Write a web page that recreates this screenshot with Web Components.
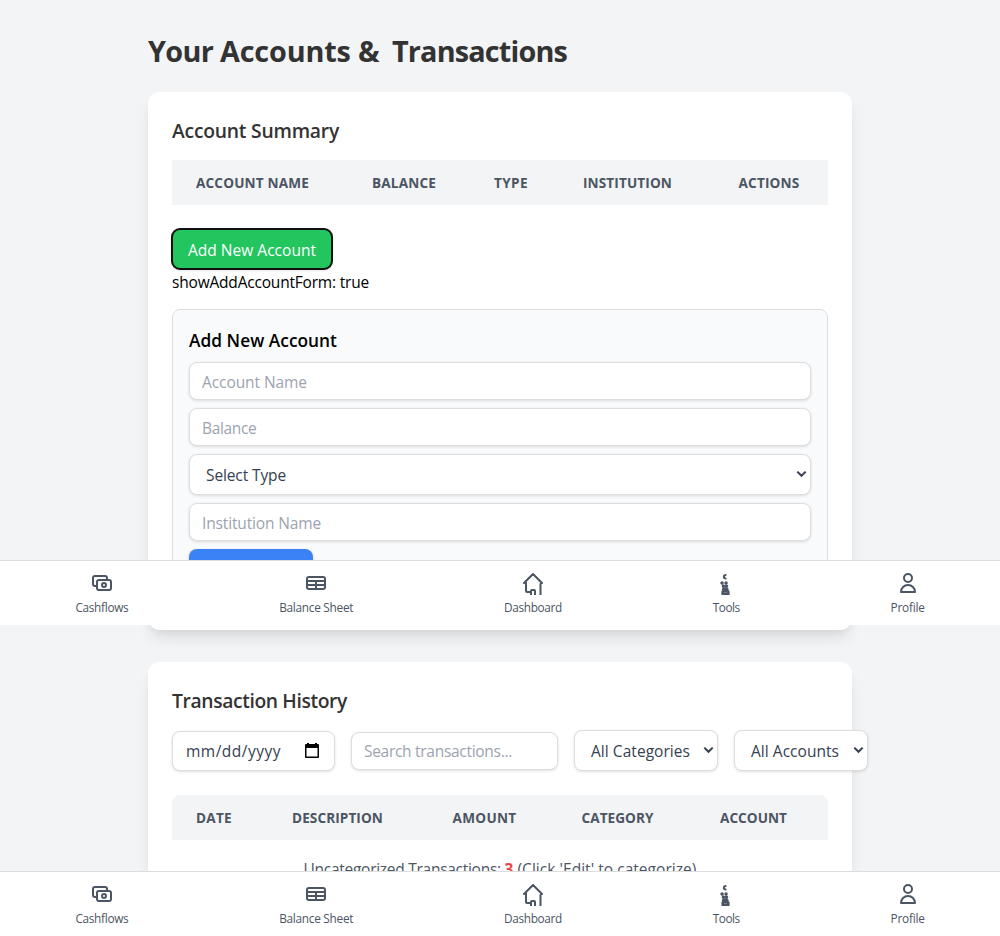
<!DOCTYPE html>
<html lang="en">
<head>
<meta charset="utf-8">
<title>Accounts</title>
<style>
html, body { margin: 0; height: 100%; overflow: hidden; }
body { background: #f3f4f6; font-family: "Open Sans", "Noto Sans", sans-serif; color: #000; }
</style>
</head>
<body>
<accounts-page></accounts-page>
<script>
const define = (name, css, html, after) => customElements.define(name, class extends HTMLElement {
  connectedCallback() {
    if (this.shadowRoot) return;
    const root = this.attachShadow({ mode: "open" });
    root.innerHTML = `<style>*{box-sizing:border-box}${css}</style>` + (typeof html === "function" ? html(this) : html);
    if (after) after(this, root);
  }
});

/* A single line of text, tracked to fill a given advance width. */
define("fit-text", ":host{display:inline-block;white-space:pre}", "<slot></slot>", (el) => {
  const target = parseFloat(el.getAttribute("w"));
  if (!target) return;
  const natural = el.getBoundingClientRect().width;
  el.style.letterSpacing = ((target - natural) / el.textContent.length) + "px";
  el.style.width = target + "px";
});

define("page-card", `
  :host{display:block;background:#fff;border-radius:12px;padding:24px;box-shadow:0 10px 15px -3px rgba(0,0,0,.1),0 4px 6px -2px rgba(0,0,0,.05)}
  h2{margin:0 0 14px;height:30px;font-size:19.3px;line-height:30px;font-weight:600;color:#333}
`, el => `<h2><fit-text w="${el.getAttribute("w")}">${el.getAttribute("heading")}</fit-text></h2><slot></slot>`);

define("table-head", `
  :host{display:grid;height:45px;align-items:center;justify-items:start;background:#f3f4f6;color:#4b5563;font-size:13.6px;font-weight:700;padding-left:24px}
  :host([rounded]){border-radius:8px 8px 0 0}
`, "<slot></slot>");

define("text-field", `
  :host{display:flex;align-items:center;height:38px;padding:1px 12px 0;border:1px solid #ddd;border-radius:8px;background:#fff;color:#9ca3af;font-size:15.5px;box-shadow:0 1px 3px rgba(0,0,0,.12)}
`, "<slot></slot>");

define("select-field", `
  :host{display:flex;align-items:center;justify-content:space-between;height:41px;padding:1px 3px 0 16px;border:1px solid #ddd;border-radius:8px;background:#fff;color:#374151;font-size:15.5px;box-shadow:0 1px 3px rgba(0,0,0,.12)}
  svg{display:block;margin-top:-2px}
`, `<slot></slot><svg width="11" height="8" viewBox="0 0 11 8" fill="none" stroke="#374151" stroke-width="2"><path d="M1.3 1.6 5.5 5.8 9.7 1.6"/></svg>`);

define("date-field", `
  :host{display:flex;align-items:center;justify-content:space-between;height:40px;padding:1px 15px 0 13px;border:1px solid #ddd;border-radius:8px;background:#fff;color:#374151;font-size:15.5px;box-shadow:0 1px 3px rgba(0,0,0,.12)}
  svg{display:block;margin-top:-1px}
`, `<slot></slot><svg width="14" height="15" viewBox="0 0 14 15"><path fill="#000" fill-rule="evenodd" d="M2 0h2v1h6V0h2v1h1a1 1 0 0 1 1 1v12a1 1 0 0 1-1 1H1a1 1 0 0 1-1-1V2a1 1 0 0 1 1-1h1zM1.5 5v8.5h11V5z"/></svg>`);

define("action-button", `
  :host{display:block}
  button{display:flex;align-items:center;height:40px;margin:0;padding:1px 16px 0;border:0;border-radius:8px;background:#3b82f6;color:#fff;font:400 15.5px "Open Sans","Noto Sans",sans-serif;box-shadow:0 1px 3px rgba(0,0,0,.2)}
  :host([primary]) button{background:#22c55e;outline:2px solid #101010;outline-offset:-1px}
`, "<button><slot></slot></button>");

define("account-form", `
  :host{display:flex;flex-direction:column;gap:8px;height:297px;border:1px solid #ddd;border-radius:8px;background:#f9fafb;padding:16px}
  h3{margin:0;height:28px;line-height:30px;font-size:17.3px;font-weight:600}
  action-button{width:124px}
`, `<h3><fit-text w="148">Add New Account</fit-text></h3>
  <text-field><fit-text w="105">Account Name</fit-text></text-field>
  <text-field><fit-text w="54.5">Balance</fit-text></text-field>
  <select-field><fit-text w="80">Select Type</fit-text></select-field>
  <text-field><fit-text w="119">Institution Name</fit-text></text-field>
  <action-button><fit-text w="92">Add Account</fit-text></action-button>`);

const icons = {
  cash: `<path d="M17 9V7a2 2 0 00-2-2H5a2 2 0 00-2 2v6a2 2 0 002 2h2m2 4h10a2 2 0 002-2v-6a2 2 0 00-2-2H9a2 2 0 00-2 2v6a2 2 0 002 2zm7-5a2 2 0 11-4 0 2 2 0 014 0z"/>`,
  table: `<path d="M3 10h18M3 14h18m-9-4v8m-7 0h14a2 2 0 002-2V8a2 2 0 00-2-2H5a2 2 0 00-2 2v8a2 2 0 002 2z"/>`,
  home: `<path d="M3 12l9-9 9 9M5 11v9a1 1 0 001 1h4M10 25v-5a1 1 0 011-1h2a1 1 0 011 1v5M19.500 13v12"/>`,
  tools: `<path stroke-width="2" d="M11.600 4a1.700 1.700 0 1 0 0 3.400"/><path stroke-width="3.400" d="M8 12h.1M12 12h.1M9.300 15.300h.2M12.500 15.300h.1M9.500 18.500h3.500"/><path stroke-width="2.600" d="M8.700 20.500h5.600v2.700H8.700z"/>`,
  user: `<path d="M16 7a4 4 0 11-8 0 4 4 0 018 0zM12 14a7 7 0 00-7 7h14a7 7 0 00-7-7z"/>`
};
define("nav-item", `
  :host{display:flex;flex-direction:column;align-items:center;color:#4b5563;font-size:11.8px;line-height:16px}
  svg{display:block;margin-bottom:4px}
`, el => `<svg width="24" height="24" viewBox="0 0 24 24" fill="none" stroke="currentColor" stroke-width="2" stroke-linecap="round" stroke-linejoin="round">${icons[el.getAttribute("icon")]}</svg><fit-text w="${el.getAttribute("w")}">${el.getAttribute("label")}</fit-text>`);

define("bottom-nav", `
  :host{display:flex;justify-content:space-around;height:65px;padding-top:10px;border-top:1px solid #ddd;background:#fff}
`, `<nav-item icon="cash" label="Cashflows" w="53"></nav-item>
  <nav-item icon="table" label="Balance Sheet" w="74"></nav-item>
  <nav-item icon="home" label="Dashboard" w="58"></nav-item>
  <nav-item icon="tools" label="Tools" w="27"></nav-item>
  <nav-item icon="user" label="Profile" w="34"></nav-item>`);

define("accounts-page", `
  :host{display:block;position:relative;height:936px;overflow:hidden}
  main{width:704px;margin:0 auto;padding-top:32px}
  h1{display:flex;margin:0 0 20px;height:40px;line-height:38px;font-size:28.8px;font-weight:700;color:#333}
  .summary{height:538px;padding-bottom:0}
  .history{margin-top:32px;height:400px}
  .accounts{grid-template-columns:176px 122px 89px 155.5px auto}
  .transactions{grid-template-columns:96px 160.5px 129px 138.5px auto;margin-top:24px}
  .add{margin-top:24px}
  .debug{height:24px;margin-bottom:16px;line-height:26px;font-size:15.5px}
  .filters{display:flex;align-items:center;gap:16px;height:41px}
  .filters>*{flex:none}
  .date{width:163px}.search{width:207px}.cats{width:144px}.accs{width:134px}
  .note{display:flex;justify-content:center;margin-top:16px;font-size:15.5px;line-height:26px;color:#4b5563}
  b{color:#ef4444}
  bottom-nav{position:absolute;left:0;right:0}
  .mid{top:560px}.end{bottom:0}
`, `<main>
  <h1><fit-text w="72">Your </fit-text><fit-text w="138">Accounts </fit-text><fit-text w="34">&amp; </fit-text><fit-text w="175">Transactions</fit-text></h1>
  <page-card class="summary" heading="Account Summary" w="167">
    <table-head class="accounts"><fit-text w="113">ACCOUNT NAME</fit-text><fit-text w="64">BALANCE</fit-text><fit-text w="34">TYPE</fit-text><fit-text w="89">INSTITUTION</fit-text><fit-text w="61">ACTIONS</fit-text></table-head>
    <action-button class="add" primary><fit-text w="128">Add New Account</fit-text></action-button>
    <div class="debug"><fit-text w="197">showAddAccountForm: true</fit-text></div>
    <account-form></account-form>
  </page-card>
  <page-card class="history" heading="Transaction History" w="175">
    <div class="filters">
      <date-field class="date"><fit-text w="95">mm/dd/yyyy</fit-text></date-field>
      <text-field class="search"><fit-text w="148">Search transactions...</fit-text></text-field>
      <select-field class="cats"><fit-text w="99">All Categories</fit-text></select-field>
      <select-field class="accs"><fit-text w="88">All Accounts</fit-text></select-field>
    </div>
    <table-head class="transactions" rounded><fit-text w="36">DATE</fit-text><fit-text w="91">DESCRIPTION</fit-text><fit-text w="64">AMOUNT</fit-text><fit-text w="72">CATEGORY</fit-text><fit-text w="67">ACCOUNT</fit-text></table-head>
    <div class="note"><fit-text w="201">Uncategorized Transactions: </fit-text><b>3</b><fit-text w="183"> (Click 'Edit' to categorize)</fit-text></div>
  </page-card>
</main>
<bottom-nav class="mid"></bottom-nav>
<bottom-nav class="end"></bottom-nav>`);
</script>
</body>
</html>
